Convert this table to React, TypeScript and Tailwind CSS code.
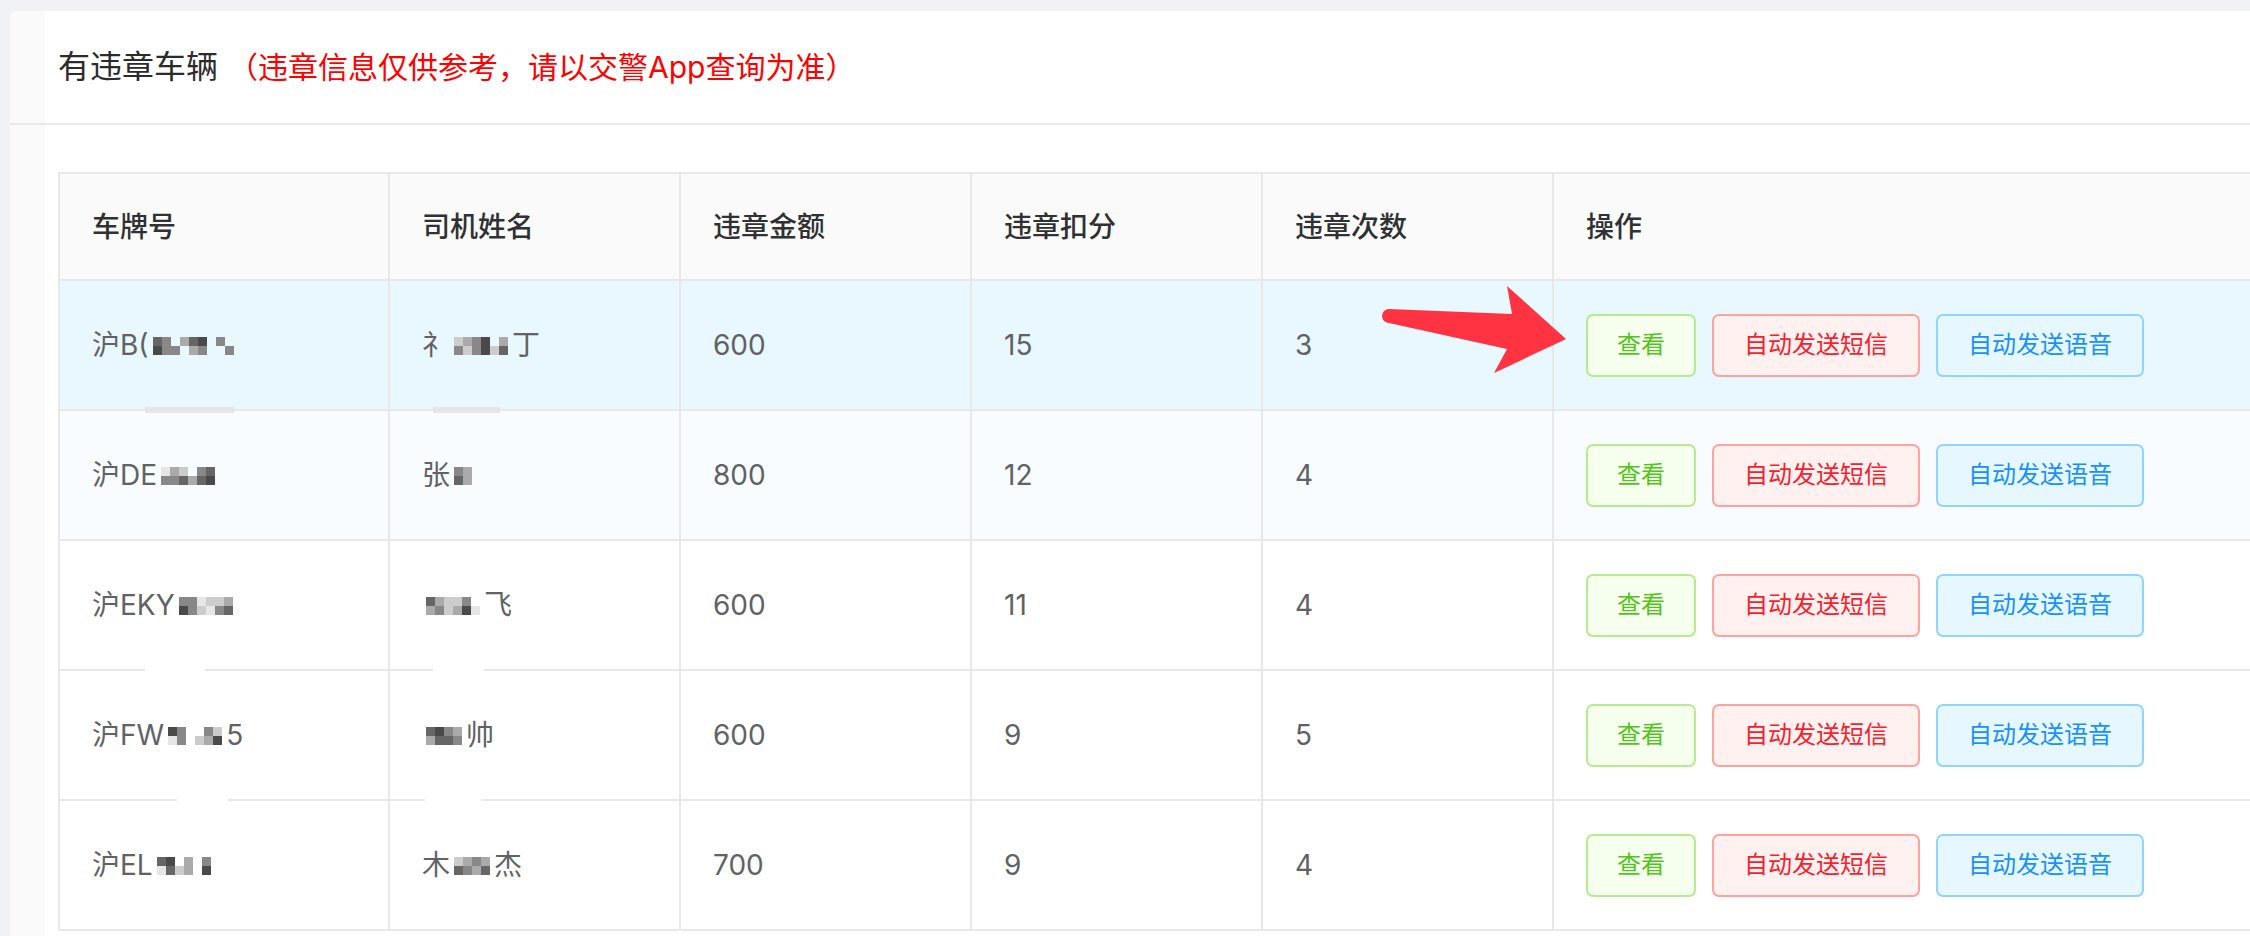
import React from "react";

type Masked = { pre: string; mask: string[]; post?: string };

type Patch = { col: number; left: number; width: number; top: number; height: number; color: string };

type Violation = {
  plate: Masked;
  driver: Masked;
  amount: string;
  points: string;
  count: string;
  patches?: Patch[];
};

const shades: Record<string, string> = {
  a: "#4a4a4a",
  b: "#666666",
  c: "#888888",
  d: "#aaaaaa",
  e: "#cccccc",
  f: "#e6e6e6",
};

const violations: Violation[] = [
  {
    plate: { pre: "沪B(", mask: ["bc.dba.c", "acc.dc..c"] },
    driver: { pre: "礻", mask: ["edca.d", "cecaeb"], post: "丁" },
    amount: "600",
    points: "15",
    count: "3",
  },
  {
    plate: { pre: "沪DE", mask: ["fde.cb", "ccbdba"] },
    driver: { pre: "张", mask: ["cd", "bd"] },
    amount: "800",
    points: "12",
    count: "4",
    patches: [
      { col: 0, left: 85, width: 89, top: -4, height: 6, color: "#e6e6e6" },
      { col: 1, left: 43, width: 67, top: -4, height: 6, color: "#e6e6e6" },
    ],
  },
  {
    plate: { pre: "沪EKY", mask: ["ccfeed", "acefcb"] },
    driver: { pre: "", mask: ["bdeec.", "dcedaf"], post: "飞" },
    amount: "600",
    points: "11",
    count: "4",
  },
  {
    plate: { pre: "沪FW", mask: ["ac..ce", "fc.eda"], post: "5" },
    driver: { pre: "", mask: ["bacd", "dbbc"], post: "帅" },
    amount: "600",
    points: "9",
    count: "5",
    patches: [
      { col: 0, left: 85, width: 60, top: -2, height: 2, color: "#ffffff" },
      { col: 1, left: 43, width: 51, top: -2, height: 2, color: "#ffffff" },
    ],
  },
  {
    plate: { pre: "沪EL", mask: ["ba.d.c", "fbed.a"] },
    driver: { pre: "木", mask: ["edcd", "bcdb"], post: "杰" },
    amount: "700",
    points: "9",
    count: "4",
    patches: [
      { col: 0, left: 117, width: 51, top: -2, height: 2, color: "#ffffff" },
      { col: 1, left: 35, width: 57, top: -2, height: 2, color: "#ffffff" },
    ],
  },
];

function Mosaic({ rows }: { rows: string[] }) {
  return (
    <span className="mx-[4px] inline-flex translate-y-[1px] flex-col">
      {rows.map((r, i) => (
        <span key={i} className="flex">
          {r.split("").map((c, j) => (
            <span
              key={j}
              className="block h-[9px] w-[9px]"
              style={{ background: shades[c] ?? "transparent" }}
            />
          ))}
        </span>
      ))}
    </span>
  );
}

function MaskedText({ value }: { value: Masked }) {
  return (
    <span className="inline-flex items-center">
      {value.pre && <span>{value.pre}</span>}
      <Mosaic rows={value.mask} />
      {value.post && <span>{value.post}</span>}
    </span>
  );
}

function Patches({ list, col }: { list?: Patch[]; col: number }) {
  return (
    <>
      {list
        ?.filter((p) => p.col === col)
        .map((p, i) => (
          <span
            key={i}
            className="absolute"
            style={{ left: p.left, width: p.width, top: p.top, height: p.height, background: p.color }}
          />
        ))}
    </>
  );
}

const headers = ["车牌号", "司机姓名", "违章金额", "违章扣分", "违章次数", "操作"];

function Arrow() {
  return (
    <svg
      className="pointer-events-none absolute left-[1375px] top-[280px]"
      width="200"
      height="100"
      viewBox="0 0 200 100"
    >
      <path
        d="M14 29 L137 34 L132 6 L191 59 L119 93 L132 69 L14 43 A7 7 0 0 1 14 29 Z"
        fill="#ff3341"
      />
    </svg>
  );
}

export default function App() {
  const cell = "relative flex items-center pl-[32px] border-r-2 border-b-2 border-[#e8e8e8]";
  const lastCell = "relative flex items-center pl-[32px] border-b-2 border-[#e8e8e8]";
  const body = "h-[130px] text-[28px] text-[#606266]";

  return (
    <div className="relative min-h-screen overflow-hidden bg-[#f0f2f5] pl-[10px] pt-[11px] font-[Inter,'Noto_Sans_CJK_SC',sans-serif]">
      <div className="min-h-[925px] rounded-tl-[6px] bg-[linear-gradient(to_right,#fafafa_0px,#fafafa_35px,#ffffff_35px)]">
        <div className="flex h-[114px] items-center border-b-2 border-[#e8e8e8] pl-[48px]">
          <span className="text-[32px] text-[#2b2b2b]">有违章车辆</span>
          <span className="ml-[10px] text-[30px] text-[#f00]">
            （违章信息仅供参考，请以交警App查询为准）
          </span>
        </div>

        <div className="pl-[48px] pt-[47px]">
          <div className="grid grid-cols-[330px_291px_291px_291px_291px_1fr] border-l-2 border-t-2 border-[#e8e8e8]">
            {headers.map((h, i) => (
              <div
                key={h}
                className={`h-[107px] bg-[#fafafa] text-[28px] font-medium text-[#303133] ${
                  i === headers.length - 1 ? lastCell : cell
                }`}
              >
                {h}
              </div>
            ))}

            {violations.map((v, i) => {
              const bg = i === 0 ? "bg-[#e9f7fe]" : i === 1 ? "bg-[#f8fcff]" : "bg-white";
              return (
                <React.Fragment key={i}>
                  <div className={`${body} ${bg} ${cell}`}>
                    <Patches list={v.patches} col={0} />
                    <MaskedText value={v.plate} />
                  </div>
                  <div className={`${body} ${bg} ${cell}`}>
                    <Patches list={v.patches} col={1} />
                    <MaskedText value={v.driver} />
                  </div>
                  <div className={`${body} ${bg} ${cell}`}>{v.amount}</div>
                  <div className={`${body} ${bg} ${cell}`}>{v.points}</div>
                  <div className={`${body} ${bg} ${cell}`}>{v.count}</div>
                  <div className={`h-[130px] gap-[16px] text-[24px] ${bg} ${lastCell}`}>
                    <button className="h-[63px] w-[110px] rounded-[7px] border-2 border-[#b7eb8f] bg-[#f6ffed] text-[#52c41a]">
                      查看
                    </button>
                    <button className="h-[63px] w-[208px] rounded-[7px] border-2 border-[#ffa39e] bg-[#fff1f0] text-[#f5222d]">
                      自动发送短信
                    </button>
                    <button className="h-[63px] w-[208px] rounded-[7px] border-2 border-[#91d5ff] bg-[#e6f7ff] text-[#1890ff]">
                      自动发送语音
                    </button>
                  </div>
                </React.Fragment>
              );
            })}
          </div>
        </div>
      </div>
      <Arrow />
    </div>
  );
}
